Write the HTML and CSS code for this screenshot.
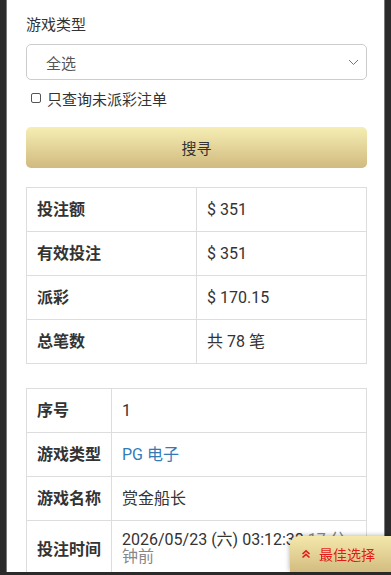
FILE: index.html
```html
<!DOCTYPE html>
<html lang="zh-CN">
<head>
  <meta charset="UTF-8" />
  <meta name="viewport" content="width=device-width, initial-scale=1" />
  <title>投注记录</title>
  <link rel="stylesheet" href="styles.css">
</head>
<body>

  <div class="screen">
    <div class="search-form">
      <label class="field-label">游戏类型</label>
      <div class="select-box">
        <span>全选</span>
        <svg class="chevron" width="11" height="7" viewBox="0 0 11 7">
          <path d="M1 1 L5.5 5.5 L10 1" fill="none" stroke="#777" stroke-width="1"/>
        </svg>
      </div>
      <label class="check-row">
        <span class="check-box"></span>
        只查询未派彩注单
      </label>
      <button class="search-btn">搜寻</button>
    </div>

    <table class="info-table summary">
      <tr><th>投注额</th><td>$ 351</td></tr>
      <tr><th>有效投注</th><td>$ 351</td></tr>
      <tr><th>派彩</th><td>$ 170.15</td></tr>
      <tr><th>总笔数</th><td>共 78 笔</td></tr>
    </table>

    <table class="info-table record">
      <tr><th>序号</th><td>1</td></tr>
      <tr><th>游戏类型</th><td><a class="game-link">PG 电子</a></td></tr>
      <tr><th>游戏名称</th><td>赏金船长</td></tr>
      <tr class="time-row"><th>投注时间</th><td>2026/05/23 (六) 03:12:38 <span class="ago">17 分钟前</span></td></tr>
      <tr><th>派彩</th><td>$ 0</td></tr>
    </table>
  </div>

  <!-- floating shortcut -->
  <div class="best-pick">
    <svg width="10" height="10" viewBox="0 0 10 10">
      <path d="M1.5 5 L5 1.8 L8.5 5 M1.5 8.5 L5 5.3 L8.5 8.5" fill="none" stroke="#e31b1b" stroke-width="1.6"/>
    </svg>
    最佳选择
  </div>

</body>
</html>
```

FILE: styles.css
```css
/* Reset & base */
* {
  box-sizing: border-box;
}
html, body {
  margin: 0;
  padding: 0;
}
body {
  font-family: Roboto, "Noto Sans CJK SC", sans-serif;
  background: #2b2b2b;
  color: #333;
  font-size: 15px;
  height: 575px;
  overflow: hidden;
}
.screen {
  margin: 0 6px;
  height: 572px;
  overflow: hidden;
  background: #fff;
  border-left: 1px solid #7a7a7a;
  border-right: 1px solid #7a7a7a;
  padding: 14px 17px 0 19px;
}

/* Search form */
.field-label {
  display: block;
  line-height: 22px;
  margin-bottom: 8px;
}
.select-box {
  height: 36px;
  border: 1px solid #ccc;
  border-radius: 5px;
  display: flex;
  align-items: center;
  justify-content: space-between;
  padding: 0 7px 0 19px;
  color: #555;
}
.check-row {
  display: flex;
  align-items: center;
  gap: 6px;
  height: 22px;
  margin-top: 7px;
  padding-left: 5px;
}
.check-box {
  width: 10px;
  height: 10px;
  border: 1px solid #555;
  border-radius: 2px;
}
.search-btn {
  display: block;
  width: 100%;
  height: 41px;
  margin-top: 18px;
  border: none;
  border-radius: 5px;
  background: linear-gradient(to bottom, #f6eeb4, #d0ba7f);
  font-family: inherit;
  font-size: 15px;
  color: #333;
}

/* Tables */
.info-table {
  width: 100%;
  border-collapse: collapse;
  margin-top: 19px;
  font-size: 16px;
}
.info-table th,
.info-table td {
  border: 1px solid #ddd;
  padding: 13px 10px;
  line-height: 17px;
  text-align: left;
  vertical-align: middle;
}
.info-table th {
  font-weight: 700;
}
.summary th {
  width: 50%;
}
.record {
  margin-top: 24px;
}
.record th {
  width: 85px;
  white-space: nowrap;
}
.time-row td {
  padding-top: 10px;
  line-height: 17px;
}
.game-link {
  color: #337ab7;
}
.ago {
  color: #888;
}

/* Floating button */
.best-pick {
  position: fixed;
  right: 0;
  bottom: 3px;
  width: 101px;
  height: 36px;
  border-radius: 9px 0 0 0;
  background: linear-gradient(to bottom, #f4e8ab, #d3bc80);
  box-shadow: -1px -1px 4px rgba(0,0,0,0.25);
  color: #e31b1b;
  font-size: 14px;
  display: flex;
  align-items: center;
  padding-left: 11px;
  gap: 8px;
}
```
